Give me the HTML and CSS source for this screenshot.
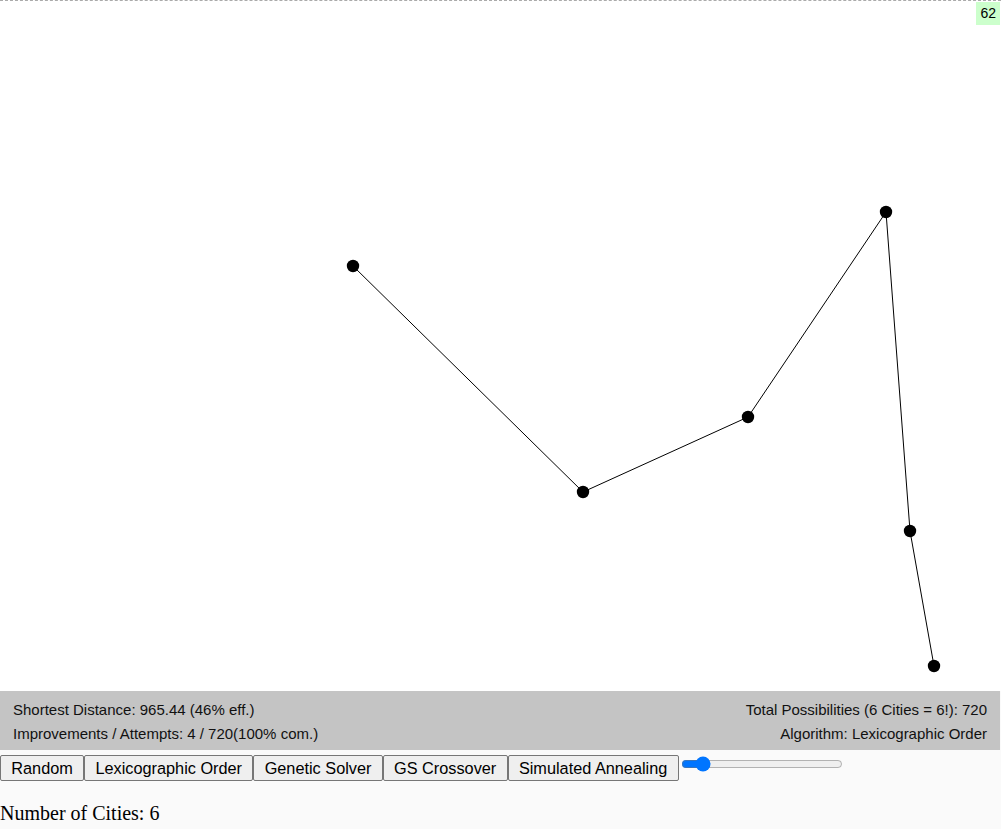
FILE: index.html
```html
<!DOCTYPE html>
<html>
<head>
<meta charset="utf-8">
<link rel="stylesheet" href="styles.css">
</head>
<body>
<div class="stage">
  <svg class="map" width="1000" height="690" viewBox="0 0 1000 690">
    <polyline points="353,265 583,491 748,416 886,211 910,530 934,665" fill="none" stroke="#000" stroke-width="1"/>
    <circle cx="353" cy="265" r="6.2"/>
    <circle cx="583" cy="491" r="6.2"/>
    <circle cx="748" cy="416" r="6.2"/>
    <circle cx="886" cy="211" r="6.2"/>
    <circle cx="910" cy="530" r="6.2"/>
    <circle cx="934" cy="665" r="6.2"/>
  </svg>
  <div class="fps">62</div>
</div>
<div class="status">
  <div class="row"><span>Shortest Distance: 965.44 (46% eff.)</span><span>Total Possibilities (6 Cities = 6!): 720</span></div>
  <div class="row"><span>Improvements / Attempts: 4 / 720(100% com.)</span><span>Algorithm: Lexicographic Order</span></div>
</div>
<div class="controls">
  <button class="btn">Random</button><button class="btn">Lexicographic Order</button><button class="btn">Genetic Solver</button><button class="btn">GS Crossover</button><button class="btn">Simulated Annealing</button><input class="slider" type="range" min="0" max="100" value="10">
</div>
<div class="count">Number of Cities: 6</div>
</body>
</html>
```
FILE: styles.css
```css
html, body {
  margin: 0;
  padding: 0;
}
body {
  background: #fafafa;
  font-family: "Liberation Sans", Arial, sans-serif;
  width: 1001px;
}
.stage {
  position: relative;
  width: 1001px;
  height: 690px;
  background: #fff;
  border-top: 1px dashed #aaaaaa;
}
.map {
  display: block;
}
.fps {
  position: absolute;
  top: 1px;
  right: 1px;
  background: #ccffcc;
  color: #000;
  font-size: 14px;
  line-height: 23px;
  padding: 0 4px;
}
.status {
  width: 1000px;
  box-sizing: border-box;
  background: #c4c4c4;
  padding: 5px 13px 4px 13px;
  font-size: 15px;
  color: #111;
}
.row {
  display: flex;
  justify-content: space-between;
  line-height: 25px;
}
.row:first-child {
  padding-top: 0.5px;
  margin-bottom: -0.5px;
}
.controls {
  display: flex;
  align-items: flex-start;
  margin-top: 5px;
}
.btn {
  font-family: "Liberation Sans", Arial, sans-serif;
  font-size: 16.3px;
  line-height: 18px;
  padding: 3px 10.3px;
  margin: 0;
  border: 1px solid #767676;
  border-radius: 2px;
  background: #efefef;
  color: #000;
}
.slider {
  width: 162px;
  margin: 1px 2px;
  accent-color: #0075ff;
}
.count {
  font-family: "Liberation Serif", "Times New Roman", serif;
  font-size: 20px;
  line-height: 23px;
  margin-top: 21px;
  color: #000;
}
```
